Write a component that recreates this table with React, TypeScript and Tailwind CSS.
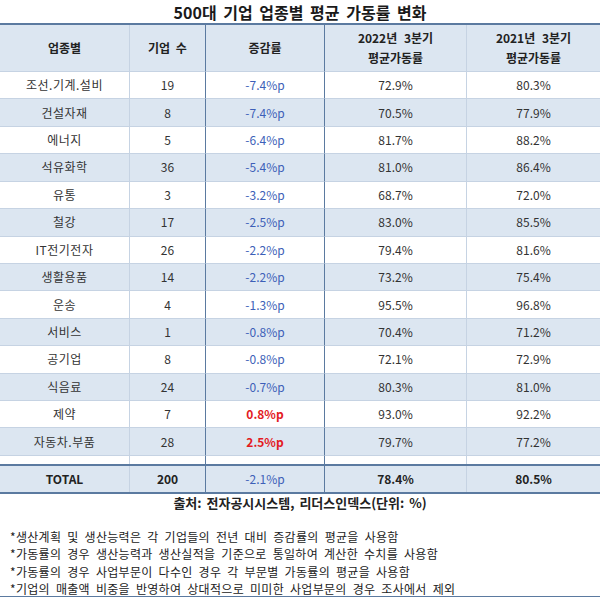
import React from 'react'

type Row = { name: string; count: string; delta: string; y2022: string; y2021: string }

const rows: Row[] = [
  { name: '조선.기계.설비', count: '19', delta: '-7.4%p', y2022: '72.9%', y2021: '80.3%' },
  { name: '건설자재', count: '8', delta: '-7.4%p', y2022: '70.5%', y2021: '77.9%' },
  { name: '에너지', count: '5', delta: '-6.4%p', y2022: '81.7%', y2021: '88.2%' },
  { name: '석유화학', count: '36', delta: '-5.4%p', y2022: '81.0%', y2021: '86.4%' },
  { name: '유통', count: '3', delta: '-3.2%p', y2022: '68.7%', y2021: '72.0%' },
  { name: '철강', count: '17', delta: '-2.5%p', y2022: '83.0%', y2021: '85.5%' },
  { name: 'IT전기전자', count: '26', delta: '-2.2%p', y2022: '79.4%', y2021: '81.6%' },
  { name: '생활용품', count: '14', delta: '-2.2%p', y2022: '73.2%', y2021: '75.4%' },
  { name: '운송', count: '4', delta: '-1.3%p', y2022: '95.5%', y2021: '96.8%' },
  { name: '서비스', count: '1', delta: '-0.8%p', y2022: '70.4%', y2021: '71.2%' },
  { name: '공기업', count: '8', delta: '-0.8%p', y2022: '72.1%', y2021: '72.9%' },
  { name: '식음료', count: '24', delta: '-0.7%p', y2022: '80.3%', y2021: '81.0%' },
  { name: '제약', count: '7', delta: '0.8%p', y2022: '93.0%', y2021: '92.2%' },
  { name: '자동차.부품', count: '28', delta: '2.5%p', y2022: '79.7%', y2021: '77.2%' },
]

const notes = [
  '*생산계획 및 생산능력은 각 기업들의 전년 대비 증감률의 평균을 사용함',
  '*가동률의 경우 생산능력과 생산실적을 기준으로 통일하여 계산한 수치를 사용함',
  '*가동률의 경우 사업부문이 다수인 경우 각 부문별 가동률의 평균을 사용함',
  '*기업의 매출액 비중을 반영하여 상대적으로 미미한 사업부문의 경우 조사에서 제외',
]

const cols = 'grid grid-cols-[130px_76px_119px_142px_133px]'

export default function App() {
  return (
    <div
      className="w-[600px] h-[597px] bg-white text-[#333] overflow-hidden"
      style={{ fontFamily: '"Malgun Gothic", "Noto Sans CJK KR", "Noto Sans", sans-serif' }}
    >
      {/* Title */}
      <div className="h-[23px] flex items-center justify-center text-[16px] font-bold text-[#1a1a1a] [word-spacing:3px]">
        500대 기업 업종별 평균 가동률 변화
      </div>

      {/* Header */}
      <div className={`${cols} h-[49px] border-t-2 border-[#5b7aa0] bg-[#dce6f1] text-[12px] font-bold text-[#222]`}>
        <div className="flex items-center justify-center border-r border-[#c6d3e3] border-b border-b-[#c6d3e3]">업종별</div>
        <div className="flex items-center justify-center border-r border-[#5b7aa0] border-b border-b-[#c6d3e3] [word-spacing:3px]">기업 수</div>
        <div className="flex items-center justify-center border-r border-[#5b7aa0] border-b border-b-[#c6d3e3]">증감률</div>
        <div className="flex flex-col items-center justify-center leading-[20px] border-r border-[#c6d3e3] border-b border-b-[#c6d3e3]">
          <span className="[word-spacing:4px]">2022년 3분기</span>
          <span>평균가동률</span>
        </div>
        <div className="flex flex-col items-center justify-center leading-[20px] border-b border-b-[#c6d3e3]">
          <span className="[word-spacing:4px]">2021년 3분기</span>
          <span>평균가동률</span>
        </div>
      </div>

      {/* Body */}
      {rows.map((r, i) => {
        const deltaColor = r.delta.startsWith('-') ? 'text-[#3d5fb8]' : 'text-[#e31b23] font-bold'
        return (
          <div
            key={r.name}
            className={`${cols} h-[27.43px] text-[12px] ${i % 2 === 1 ? 'bg-[#dce6f1]' : 'bg-white'}`}
          >
            <div className="flex items-center justify-center border-r border-b border-[#c6d3e3] tracking-[0.5px]">{r.name}</div>
            <div className="flex items-center justify-center border-r border-r-[#5b7aa0] border-b border-b-[#c6d3e3]">{r.count}</div>
            <div className={`flex items-center justify-center border-r border-r-[#5b7aa0] border-b border-b-[#c6d3e3] ${deltaColor}`}>{r.delta}</div>
            <div className="flex items-center justify-center border-r border-b border-[#c6d3e3]">{r.y2022}</div>
            <div className="flex items-center justify-center border-b border-[#c6d3e3]">{r.y2021}</div>
          </div>
        )
      })}

      {/* Spacer row */}
      <div className={`${cols} h-[8px] bg-white`}>
        <div className="border-r border-[#c6d3e3]" />
        <div className="border-r border-[#5b7aa0]" />
        <div className="border-r border-[#5b7aa0]" />
        <div className="border-r border-[#c6d3e3]" />
        <div />
      </div>

      {/* Total */}
      <div className={`${cols} h-[30px] border-y-2 border-[#5b7aa0] bg-[#dce6f1] text-[12px] font-bold text-[#222]`}>
        <div className="flex items-center justify-center border-r border-[#c6d3e3]">TOTAL</div>
        <div className="flex items-center justify-center border-r border-[#5b7aa0]">200</div>
        <div className="flex items-center justify-center border-r border-[#5b7aa0] font-normal text-[#3d5fb8]">-2.1%p</div>
        <div className="flex items-center justify-center border-r border-[#c6d3e3]">78.4%</div>
        <div className="flex items-center justify-center">80.5%</div>
      </div>

      {/* Source */}
      <div className="h-[17px] flex items-center justify-center text-[13px] font-bold text-[#222] [word-spacing:2px]">
        출처: 전자공시시스템, 리더스인덱스(단위: %)
      </div>

      {/* Notes */}
      <div className="pt-[17px] pl-[10px] h-[87px] border-b-2 border-[#5b7aa0] text-[12px] leading-[17.5px] text-[#222] tracking-[0.3px] [word-spacing:3px]">
        {notes.map(n => (
          <div key={n}>{n}</div>
        ))}
      </div>
    </div>
  )
}
